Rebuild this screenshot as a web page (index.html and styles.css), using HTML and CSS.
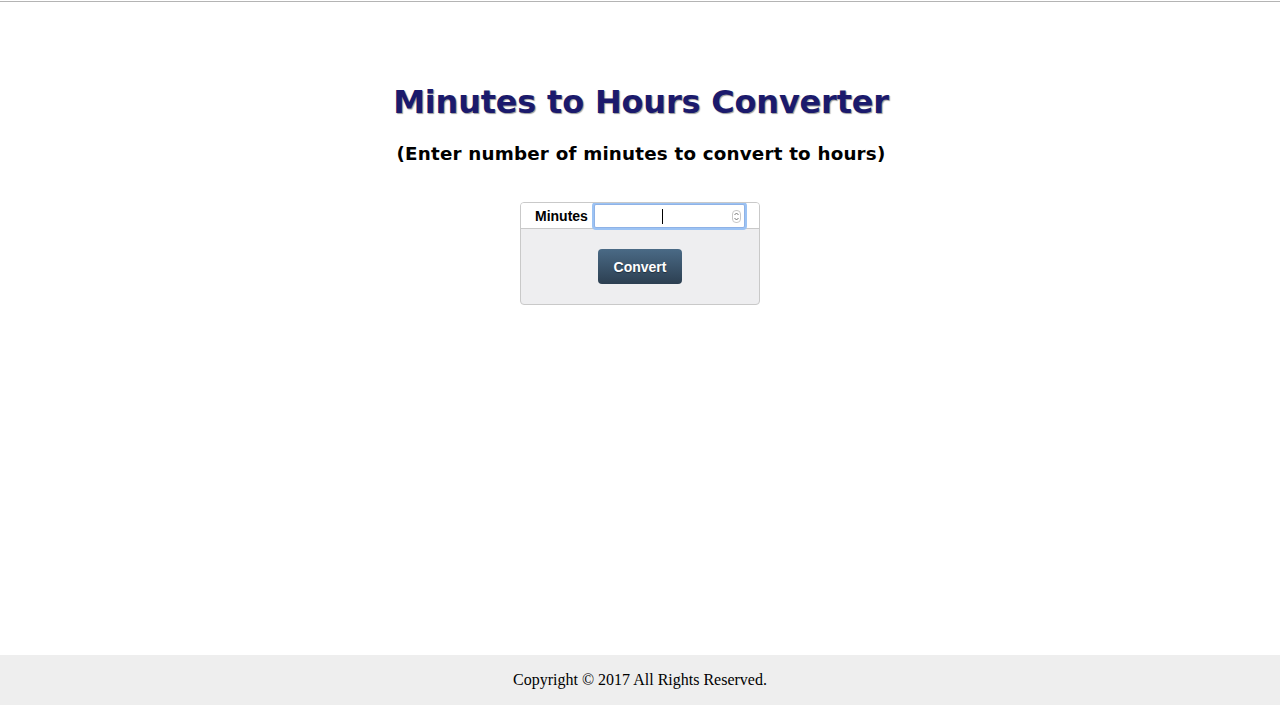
FILE: index.html
```html
<!DOCTYPE html>
<html>
<head>
<meta charset="utf-8">
<title>Minutes to Hours Converter</title>
<link rel="stylesheet" href="styles.css">
</head>
<body>
<div class="page">
  <main class="content">
    <h1 class="title">Minutes to Hours Converter</h1>
    <h2 class="subtitle">(Enter number of minutes to convert to hours)</h2>
    <form class="converter">
      <div class="row">
        <label class="label" for="minutes">Minutes</label>
        <div class="field">
          <input id="minutes" class="input" type="text">
          <span class="caret"></span>
          <span class="spinner">
            <svg width="7" height="11" viewBox="0 0 7 11"><path d="M1.5 4 L3.5 2 L5.5 4" fill="none" stroke="#666" stroke-width="0.9"/><path d="M1.5 7 L3.5 9 L5.5 7" fill="none" stroke="#666" stroke-width="0.9"/></svg>
          </span>
        </div>
      </div>
      <div class="actions">
        <button type="button" class="btn">Convert</button>
      </div>
    </form>
  </main>
  <footer class="footer">Copyright © 2017 All Rights Reserved.</footer>
</div>
</body>
</html>
```
FILE: styles.css
```css
html, body {
  margin: 0;
  padding: 0;
}
body {
  background: #fff;
  border-top: 1px solid #fff;
}
.page {
  min-height: 704px;
  display: flex;
  flex-direction: column;
  border-top: 1px solid #b4b4b4;
  box-sizing: border-box;
}
.content {
  flex: 1;
  display: flex;
  flex-direction: column;
  align-items: center;
  padding-top: 80px;
}
.title {
  margin: 0;
  font-family: "DejaVu Sans", Verdana, sans-serif;
  font-weight: bold;
  font-size: 32px;
  line-height: 40px;
  color: #1b1a6c;
  text-shadow: 1px 1px 1px #9a9a9a;
  letter-spacing: -0.2px;
  padding-left: 2px;
}
.subtitle {
  margin: 20px 0 0 0;
  font-family: "DejaVu Sans", Verdana, sans-serif;
  font-weight: bold;
  font-size: 18.3px;
  line-height: 24px;
  color: #000;
  letter-spacing: 0.2px;
  padding-left: 2px;
}
.converter {
  margin-top: 36px;
  width: 240px;
  box-sizing: border-box;
  border: 1px solid #c9c9c9;
  border-radius: 4px;
  overflow: hidden;
  background: #eeeef0;
}
.row {
  display: flex;
  align-items: center;
  background: #fff;
  border-bottom: 1px solid #c9c9c9;
  height: 25px;
  padding-left: 14px;
}
.label {
  font-family: "Liberation Sans", Arial, sans-serif;
  font-weight: bold;
  font-size: 14px;
  color: #000;
  margin-right: 6px;
}
.field {
  position: relative;
  width: 151px;
  height: 24px;
}
.input {
  width: 100%;
  height: 100%;
  box-sizing: border-box;
  border: 1px solid #8fb2e6;
  border-radius: 2px;
  box-shadow: 0 0 0 2px #9cc3f4;
  outline: none;
  padding: 0 4px;
  font-size: 14px;
  background: #fff;
}
.caret {
  position: absolute;
  left: 68px;
  top: 5px;
  width: 1px;
  height: 15px;
  background: #000;
}
.spinner {
  position: absolute;
  right: 4px;
  top: 6px;
  width: 7px;
  height: 11px;
  border: 1px solid #c8c8c8;
  border-radius: 4px;
  display: flex;
  box-sizing: content-box;
}
.actions {
  display: flex;
  justify-content: center;
  padding: 20px 0 20px 0;
}
.btn {
  width: 84px;
  height: 35px;
  border: none;
  border-radius: 4px;
  background: linear-gradient(to bottom, #4a6a86, #2c3f51);
  color: #fff;
  font-family: "Liberation Sans", Arial, sans-serif;
  font-weight: bold;
  font-size: 14px;
  text-shadow: 0 1px 1px rgba(0,0,0,0.4);
  cursor: pointer;
}
.footer {
  height: 50px;
  background: #eeeeee;
  display: flex;
  align-items: center;
  justify-content: center;
  font-family: "Liberation Serif", "Times New Roman", serif;
  font-size: 16px;
  color: #000;
}
```
